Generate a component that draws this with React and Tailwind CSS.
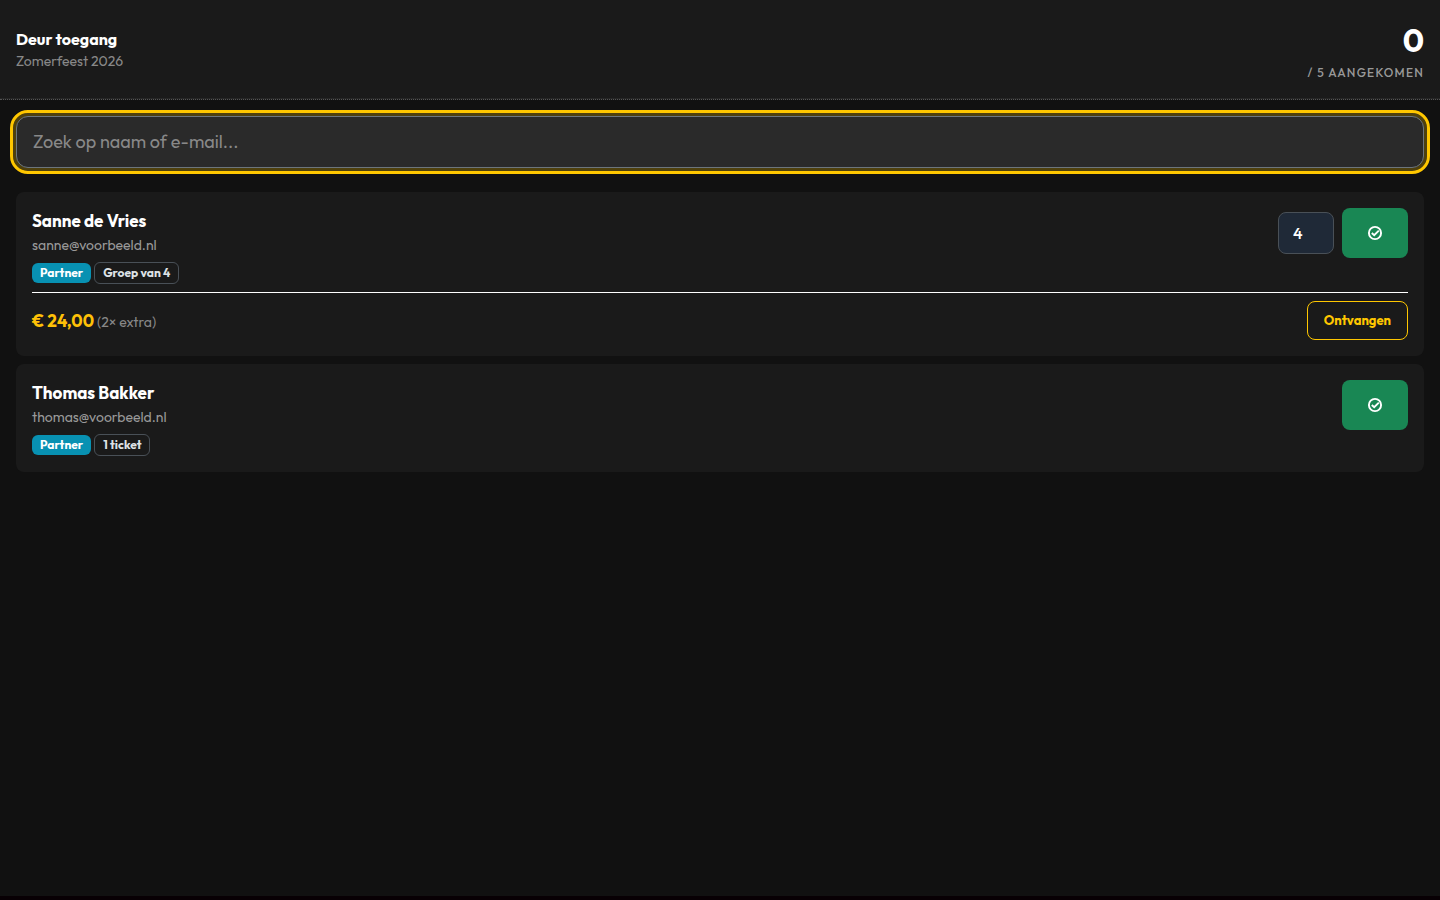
import { useState } from "react";

const guests = [
  { name: "Sanne de Vries", email: "sanne@voorbeeld.nl", ticket: "Groep van 4", group: 4, due: "€ 24,00", extra: "(2× extra)" },
  { name: "Thomas Bakker", email: "thomas@voorbeeld.nl", ticket: "1 ticket" },
];

function CheckCircle() {
  return (
    <svg viewBox="0 0 16 16" className="size-4" fill="none" stroke="currentColor" aria-hidden="true">
      <circle cx="8" cy="8" r="6.1" strokeWidth="1.9" />
      <path d="M4.8 8 7.2 10.2 11.8 5.6" strokeWidth="1.9" />
    </svg>
  );
}

function GuestCard({ guest }) {
  const [count, setCount] = useState(guest.group);
  return (
    <li className="rounded-lg bg-[#1a1a1a] p-4">
      <div className="flex items-start justify-between gap-4">
        <div>
          <h2 className="text-[17px] leading-[26px] font-bold text-white">{guest.name}</h2>
          <p className="text-sm leading-[22px] text-[#999]">{guest.email}</p>
          <div className="mt-1.5 flex items-center gap-[3px] text-xs leading-4 font-bold">
            <span className="rounded-md bg-[#0891b2] px-2 py-0.5 text-white">Partner</span>
            <span className="rounded-md border border-[#495057] px-2 py-0.5 text-[#dee2e6]">{guest.ticket}</span>
          </div>
        </div>
        <div className="flex items-center gap-2">
          {guest.group && (
            <input
              type="number"
              aria-label={`Aantal personen voor ${guest.name}`}
              value={count}
              min={1}
              onChange={(e) => setCount(e.target.value)}
              className="h-[42px] w-14 rounded-lg border border-[#495057] bg-[#1f2937] px-3.5 text-base font-medium text-white"
            />
          )}
          <button
            type="button"
            aria-label={`${guest.name} inchecken`}
            className="flex h-[50px] w-[66px] items-center justify-center rounded-lg bg-[#198754] text-white"
          >
            <CheckCircle />
          </button>
        </div>
      </div>
      {guest.due && (
        <div className="mt-2 flex items-center justify-between border-t border-white pt-2">
          <p className="text-sm text-[#888]">
            <strong className="text-[17px] leading-6 font-bold text-[#ffc107]">{guest.due}</strong> {guest.extra}
          </p>
          <button type="button" className="h-[39px] rounded-lg border border-[#ffc700] px-4 text-[13px] font-bold text-[#ffc700]">
            Ontvangen
          </button>
        </div>
      )}
    </li>
  );
}

export default function App() {
  const [query, setQuery] = useState("");
  const shown = guests.filter((g) => (g.name + g.email).toLowerCase().includes(query.toLowerCase()));
  return (
    <div className="min-h-screen border-b-4 border-[#080004] bg-[#111] font-['Outfit','Lato',sans-serif]">
      <header className="flex items-start justify-between border-b border-dotted border-[#555] bg-[#1a1a1a] px-4 pt-6 pb-[17px] shadow-[inset_0_-1px_0_#262626]">
        <div className="pt-[3px]">
          <h1 className="text-base leading-6 font-bold text-white">Deur toegang</h1>
          <p className="text-sm leading-5 text-[#888]">Zomerfeest 2026</p>
        </div>
        <div className="text-right">
          <p className="text-[32px] leading-8 font-bold text-white">0</p>
          <p className="mt-2 text-xs leading-[18px] font-medium tracking-widest text-[#999] uppercase">/ 5 aangekomen</p>
        </div>
      </header>
      <main>
        <div className="p-4">
          <input
            type="search"
            aria-label="Zoek op naam of e-mail"
            placeholder="Zoek op naam of e-mail..."
            value={query}
            onChange={(e) => setQuery(e.target.value)}
            className="block h-[52px] w-full rounded-xl border border-[#6c757d] bg-[#2a2a2a] px-4 pb-0.5 text-lg text-white ring-3 ring-[#4e400e] outline-3 outline-offset-3 outline-[#ffc700] placeholder:text-[#888]"
          />
        </div>
        <ul className="flex flex-col gap-2 px-4 pt-2">
          {shown.map((guest) => (
            <GuestCard key={guest.email} guest={guest} />
          ))}
        </ul>
      </main>
    </div>
  );
}
